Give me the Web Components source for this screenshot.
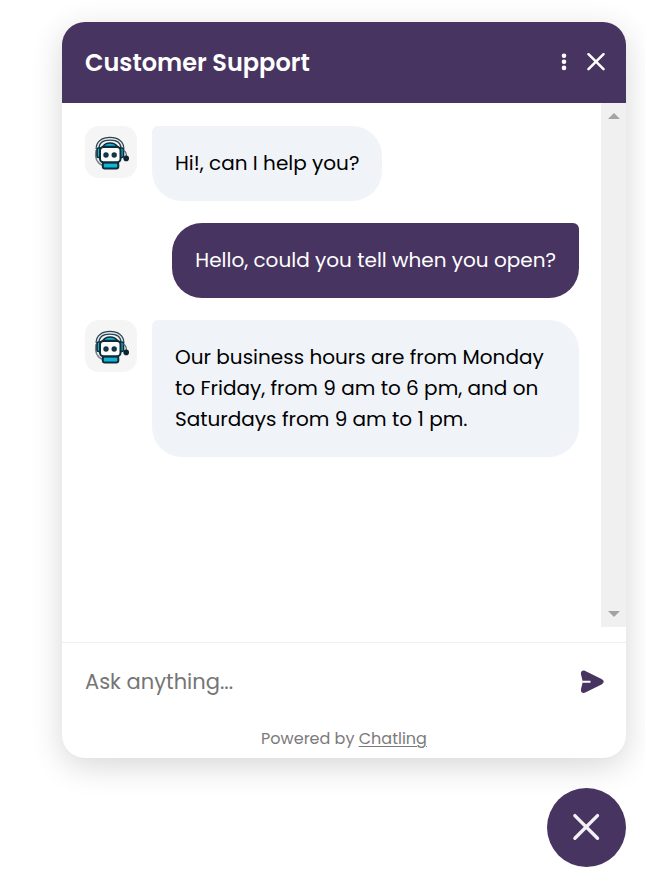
<!DOCTYPE html>
<html lang="en">
<head>
<meta charset="utf-8">
<title>Customer Support</title>
<style>
body { margin: 0; background: #fff; font-family: Poppins, Inter, sans-serif; }
</style>
</head>
<body>
<support-widget></support-widget>
<script>
const define = (name, html) => {
  const template = document.createElement('template');
  template.innerHTML = html;
  customElements.define(name, class extends HTMLElement {
    constructor() {
      super();
      this.attachShadow({ mode: 'open' }).append(template.content.cloneNode(true));
    }
  });
};

define('bot-avatar', `
<style>
:host { display: block; flex: none; width: 52px; height: 52px; border-radius: 14px; background: #f5f5f5; }
svg { display: block; width: 100%; height: 100%; }
</style>
<svg viewBox="0 0 52 52" role="img" aria-label="Support bot">
  <path d="M12.500 23C12.500 16 18 12.800 25 12.800S37.500 16 37.500 23" fill="none" stroke="#2b4350" stroke-width="4"/>
  <path d="M12.500 23C12.500 16 18 12.800 25 12.800S37.500 16 37.500 23" fill="none" stroke="#e6edf0" stroke-width="1.600"/>
  <path d="M18 20.500Q20 17 25 17T32.500 20.500Z" fill="#14b4d0" stroke="#102b39" stroke-width="1.600"/>
  <path d="M11 24C9.800 31 11 37 18 39.500" fill="none" stroke="#71838b" stroke-width="1.400"/>
  <rect x="12" y="22" width="4.500" height="9.500" rx="1.600" fill="#14b4d0" stroke="#102b39" stroke-width="1.600"/>
  <rect x="34" y="22" width="4.500" height="9.500" rx="1.600" fill="#14b4d0" stroke="#102b39" stroke-width="1.600"/>
  <rect x="17.800" y="36.500" width="15.500" height="6" rx="2" fill="#12b5d3" stroke="#102b39" stroke-width="2"/>
  <rect x="15" y="21" width="20.500" height="15.300" rx="3.500" fill="#fafcfc" stroke="#102b39" stroke-width="2"/>
  <circle cx="21" cy="29" r="2.700" fill="#173444"/>
  <circle cx="29.200" cy="29" r="2.700" fill="#173444"/>
  <path d="M38.500 24Q42 26.500 41.200 31" fill="none" stroke="#56656d" stroke-width="1.200"/>
  <circle cx="41.200" cy="32.400" r="2.800" fill="#0d2431"/>
</svg>`);

define('chat-message', `
<style>
:host { display: flex; align-items: flex-start; gap: 15px; }
:host([from="user"]) { justify-content: flex-end; }
:host([from="user"]) bot-avatar { display: none; }
p { margin: 0; padding: 22px 23px; border-radius: 6px 30px 30px 30px; background: #f0f4f9; color: #000; font-size: 20px; line-height: 31px; }
:host([from="user"]) p { border-radius: 30px 6px 30px 30px; background: #483460; color: #fff; }
</style>
<bot-avatar></bot-avatar>
<p><slot></slot></p>`);

define('chat-header', `
<style>
:host { display: flex; align-items: center; flex: none; height: 81px; padding: 0 14px 0 23px; background: #483460; color: #fff; box-sizing: border-box; }
h1 { flex: 1; margin: 0; font-size: 24px; line-height: 36px; font-weight: 600; }
button { display: grid; place-items: center; width: 32px; height: 36px; padding: 0; border: 0; background: none; color: inherit; cursor: pointer; }
svg { display: block; }
</style>
<h1><slot></slot></h1>
<button type="button" aria-label="Menu"><svg width="6" height="20" viewBox="0 0 6 20" fill="currentColor"><circle cx="3" cy="2.700" r="2.300"/><circle cx="3" cy="8.800" r="2.300"/><circle cx="3" cy="14.900" r="2.300"/></svg></button>
<button type="button" aria-label="Close"><svg width="20" height="20" viewBox="0 0 20 20" fill="none" stroke="currentColor" stroke-width="2.500" stroke-linecap="round"><path d="M2.500 1.200L17.500 16.200M17.500 1.200L2.500 16.200"/></svg></button>`);

define('scroll-rail', `
<style>
:host { display: flex; flex-direction: column; justify-content: space-between; flex: none; width: 25px; background: #f0f0f0; }
button { display: grid; place-items: center; width: 25px; height: 26px; padding: 0; border: 0; background: none; }
svg { display: block; }
</style>
<button type="button" aria-label="Scroll up"><svg width="12" height="6" viewBox="0 0 12 6"><path d="M0 6L6 0L12 6Z" fill="#a3a3a3"/></svg></button>
<button type="button" aria-label="Scroll down"><svg width="12" height="6" viewBox="0 0 12 6"><path d="M0 0L6 6L12 0Z" fill="#a3a3a3"/></svg></button>`);

define('chat-log', `
<style>
:host { display: flex; flex: 1; }
div { flex: 1; min-width: 0; display: flex; flex-direction: column; gap: 22px; padding: 23px 22px 23px 23px; }
</style>
<div role="log"><slot></slot></div>
<scroll-rail></scroll-rail>`);

define('chat-composer', `
<style>
:host { display: block; flex: none; margin-top: 15px; border-top: 1px solid #f0f0f0; }
form { display: flex; align-items: center; height: 78px; padding: 0 20px 0 23px; }
input { flex: 1; min-width: 0; padding: 0; border: 0; outline: 0; background: none; font: inherit; font-size: 21px; line-height: 32px; color: #000; }
input::placeholder { color: #757575; opacity: 1; }
button { display: grid; place-items: center; width: 28px; height: 32px; padding: 0; border: 0; background: none; cursor: pointer; }
svg { display: block; }
footer { height: 37px; text-align: center; font-size: 16px; line-height: 36px; color: #7b7b7b; }
a { color: inherit; text-underline-offset: 2px; text-decoration-thickness: 1px; }
</style>
<form>
  <input type="text" aria-label="Message" placeholder="Ask anything...">
  <button type="button" aria-label="Send"><svg width="24" height="24" viewBox="0 0 24 24"><path d="M1 4.500C.5 1.500 2.500-.2 5.300 1L21.500 9Q26 11.700 21.500 14.400L5.300 22.500C2.500 23.700 .5 22 1 19L2.800 11.700Z" fill="#483460"/><path d="M2.500 11.700H10.500" stroke="#fff" stroke-width="2"/></svg></button>
</form>
<footer>Powered by <a href="#">Chatling</a></footer>`);

define('chat-launcher', `
<style>
:host { display: block; }
button { display: grid; place-items: center; width: 79px; height: 79px; padding: 0; border: 0; border-radius: 50%; background: #483460; color: #f4f1f6; cursor: pointer; }
</style>
<button type="button" aria-label="Close chat"><svg width="29" height="29" viewBox="0 0 29 29" fill="none" stroke="currentColor" stroke-width="3.400" stroke-linecap="round"><path d="M2.900 2.600L25.500 25.200M25.500 2.600L2.900 25.200"/></svg></button>`);

define('support-widget', `
<style>
:host { display: flex; flex-direction: column; align-items: flex-end; gap: 30px; min-height: 100vh; padding: 22px 19px 15px 62px; box-sizing: border-box; }
section { flex: 1; align-self: stretch; display: flex; flex-direction: column; overflow: hidden; border-radius: 23px; background: #fff; box-shadow: 0 8px 32px rgba(0, 0, 0, .16); }
</style>
<section aria-label="Chat">
  <chat-header>Customer Support</chat-header>
  <chat-log>
    <chat-message from="bot">Hi!, can I help you?</chat-message>
    <chat-message from="user">Hello, could you tell when you open?</chat-message>
    <chat-message from="bot">Our business hours are from Monday to Friday, from 9 am to 6 pm, and on Saturdays from 9 am to 1 pm.</chat-message>
  </chat-log>
  <chat-composer></chat-composer>
</section>
<chat-launcher></chat-launcher>`);
</script>
</body>
</html>
